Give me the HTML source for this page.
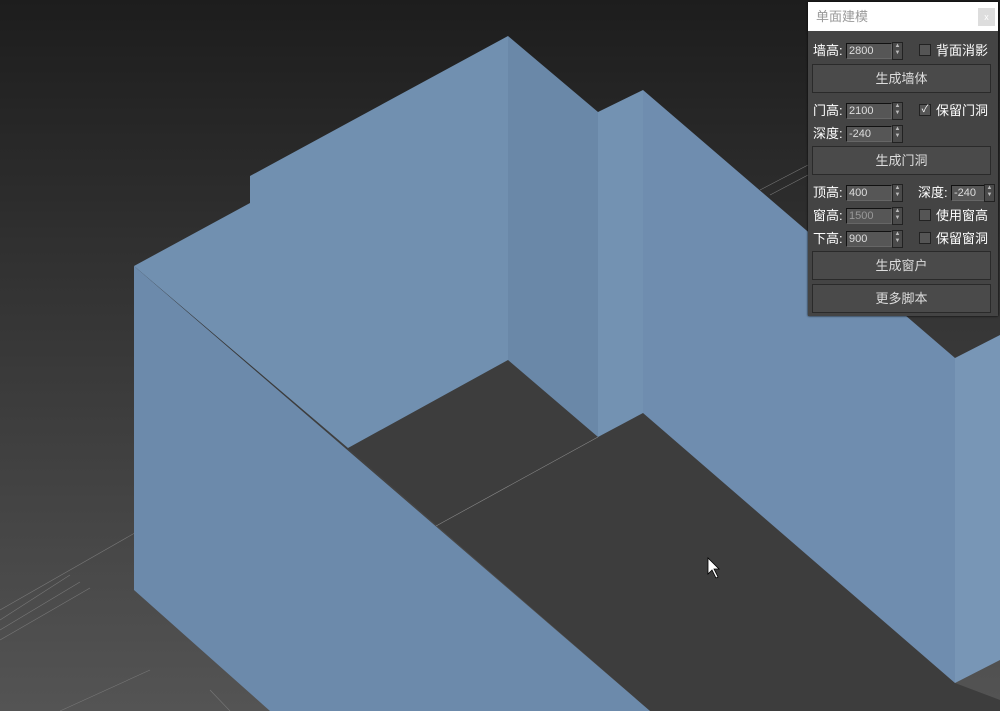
<!DOCTYPE html><html><head><meta charset="utf-8"><style>
body{margin:0;width:1000px;height:711px;overflow:hidden;background:linear-gradient(#1d1d1d,#545454);font-family:"Liberation Sans","Noto Sans CJK SC",sans-serif;position:relative}
svg{position:absolute;left:0;top:0}
.p{position:absolute;left:808px;top:2px;width:190px;height:314px;background:#444;box-shadow:0 0 2px #000}
.t{height:29px;background:#fff;color:#999;font-size:13px;line-height:29px;padding-left:8px;position:relative}
.x{position:absolute;right:3px;top:6px;width:17px;height:18px;background:#ddd;color:#fff;font-size:9px;text-align:center;line-height:18px}
.a{position:absolute;font-size:13px;color:#fff;white-space:nowrap;line-height:16px}
.in{position:absolute;width:42px;height:14px;background:#565656;border:1px solid #111;border-right-color:#666;border-bottom-color:#666;color:#ddd;font-size:11px;line-height:14px;padding-left:2px}
.sp{position:absolute;width:9px;height:16px;border:1px solid #222;background:#4a4a4a;color:#bbb;font-size:6px;line-height:7px;text-align:center}
.cb{position:absolute;width:10px;height:10px;background:#555;border:1px solid #222;color:#fff;font-size:10px;line-height:10px;text-align:center}
.b{position:absolute;left:4px;width:177px;height:27px;border:1px solid #2a2a2a;background:#4a4a4a;color:#ddd;font-size:13px;text-align:center;line-height:27px}
</style></head><body>
<svg width="1000" height="711">
<g stroke="#777" stroke-width="0.6" fill="none">
<line x1="0" y1="610" x2="140" y2="530"/><line x1="0" y1="620" x2="70" y2="575"/><line x1="0" y1="630" x2="80" y2="582"/><line x1="0" y1="640" x2="90" y2="588"/>
<line x1="150" y1="670" x2="60" y2="711"/><line x1="210" y1="690" x2="230" y2="711"/>
<line x1="760" y1="190" x2="808" y2="165"/><line x1="770" y1="195" x2="808" y2="175"/>
</g>
<polygon points="348,448 508,360 598,437 643,413 955,683 1000,700 1000,711 650,711" fill="#3d3d3d"/>
<line x1="436" y1="526" x2="598" y2="437" stroke="#888" stroke-width="0.6"/>
<polygon points="134,266 250,203 250,176 508,36 508,360 348,448" fill="#7190b0"/>
<polygon points="508,36 598,112 598,437 508,360" fill="#6a88a8"/>
<polygon points="598,112 643,90 643,413 598,437" fill="#7392b2"/>
<polygon points="643,90 955,358 955,683 643,413" fill="#6f8daf"/>
<polygon points="955,358 1000,335 1000,660 955,683" fill="#7896b6"/>
<polygon points="134,266 650,711 270,711 134,590" fill="#6c8aab"/>
<polygon points="708,558 708,574 712,570 716,578 718,577 714,569 719,569" fill="#fff" stroke="#000" stroke-width="0.8"/>
</svg>
<div class="p">
<div class="t">单面建模<div class="x">x</div></div>
<div class="a" style="left:5px;top:41px">墙高:</div><div class="in" style="left:38px;top:41px">2800</div><div class="sp" style="left:84px;top:40px">▲<br>▼</div>
<div class="cb" style="left:111px;top:42px"></div><div class="a" style="left:128px;top:41px">背面消影</div>
<div class="b" style="top:62px">生成墙体</div>
<div class="a" style="left:5px;top:101px">门高:</div><div class="in" style="left:38px;top:101px">2100</div><div class="sp" style="left:84px;top:100px">▲<br>▼</div>
<div class="cb" style="left:111px;top:102px">✓</div><div class="a" style="left:128px;top:101px">保留门洞</div>
<div class="a" style="left:5px;top:124px">深度:</div><div class="in" style="left:38px;top:124px">-240</div><div class="sp" style="left:84px;top:123px">▲<br>▼</div>
<div class="b" style="top:144px">生成门洞</div>
<div class="a" style="left:5px;top:183px">顶高:</div><div class="in" style="left:38px;top:183px">400</div><div class="sp" style="left:84px;top:182px">▲<br>▼</div>
<div class="a" style="left:110px;top:183px">深度:</div><div class="in" style="left:143px;top:183px;width:30px">-240</div><div class="sp" style="left:176px;top:182px">▲<br>▼</div>
<div class="a" style="left:5px;top:206px">窗高:</div><div class="in" style="left:38px;top:206px;color:#999">1500</div><div class="sp" style="left:84px;top:205px">▲<br>▼</div>
<div class="cb" style="left:111px;top:207px"></div><div class="a" style="left:128px;top:206px">使用窗高</div>
<div class="a" style="left:5px;top:229px">下高:</div><div class="in" style="left:38px;top:229px">900</div><div class="sp" style="left:84px;top:228px">▲<br>▼</div>
<div class="cb" style="left:111px;top:230px"></div><div class="a" style="left:128px;top:229px">保留窗洞</div>
<div class="b" style="top:249px">生成窗户</div>
<div class="b" style="top:282px">更多脚本</div>
</div>
</body></html>
